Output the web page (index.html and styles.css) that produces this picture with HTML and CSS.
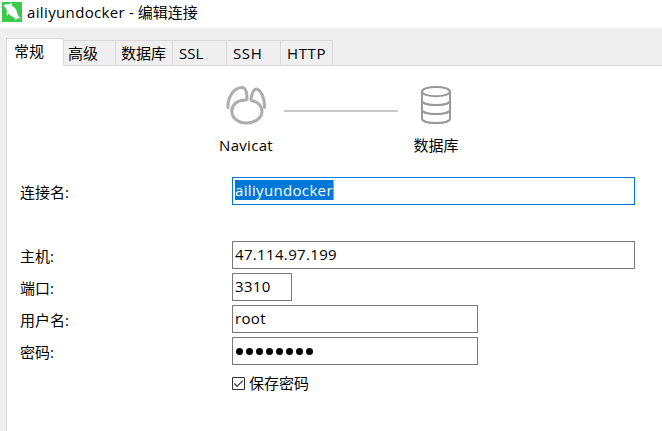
FILE: index.html
```html
<!DOCTYPE html>
<html lang="zh-CN">
<head>
<meta charset="utf-8">
<title>ailiyundocker - 编辑连接</title>
<link rel="stylesheet" href="styles.css">
</head>
<body>
<header class="titlebar">
  <svg class="logo" width="20" height="20" viewBox="0 0 20 20"><rect width="20" height="20" fill="#3bca4b"/><path d="M1.5 3.6Q3.5 1.8 6.5 2.2L9.6 1 9.8 3.4Q14.5 6 15.3 11.5Q15.8 14 18.8 16.6L15.6 16.2 13.5 18.6Q13.4 16.5 11.8 15.3Q8 14 6.6 11.6L5.2 14.2Q4 12 5 9.4Q4.6 7.2 3.2 5.2Z" fill="#fff"/></svg>
  <h1 class="title"><span class="latin">ailiyundocker</span> - 编辑连接</h1>
</header>
<main class="dialog">
  <nav class="tabs">
    <div class="tab active">常规</div>
    <div class="tab advanced">高级</div>
    <div class="tab database">数据库</div>
    <div class="tab ssl">SSL</div>
    <div class="tab ssh">SSH</div>
    <div class="tab http">HTTP</div>
  </nav>
  <section class="panel">
    <div class="route">
      <div class="endpoint">
        <svg width="42" height="42" viewBox="0 0 42 42" fill="none" stroke="#adadad" stroke-width="3" stroke-linecap="round" stroke-linejoin="round"><path d="M3 23.5C2.5 13 9 3.5 17 3.5 20.5 3.5 22 8 22 14.5 22 16 20.5 16.2 18.5 16.2 12 16.2 6.8 21 6.8 27 6.8 34.5 13.5 39 21.5 39 30.5 39 37 33.5 37 27.5 37 21.5 32 17.8 28 17 26.2 16.6 25.7 16.1 26 14.5 27 9 28.8 5 31.5 5 36 6 40 15 39.5 23.5"/></svg>
        <span class="navicat">Navicat</span>
      </div>
      <div class="link"></div>
      <div class="endpoint">
        <svg width="42" height="42" viewBox="0 0 42 42" fill="none" stroke="#999" stroke-width="2"><ellipse cx="21" cy="7.6" rx="14" ry="4.7"/><path d="M7 7.6V34.6c0 6 28 6 28 0V7.6M7 16.6c0 6 28 6 28 0M7 25.6c0 6 28 6 28 0"/></svg>
        <span>数据库</span>
      </div>
    </div>
    <form class="form">
      <div class="row name"><label>连接名:</label><div class="field focus"><span class="selection">ailiyundocker</span></div></div>
      <div class="row"><label>主机:</label><div class="field host">47.114.97.199</div></div>
      <div class="row"><label>端口:</label><div class="field port">3310</div></div>
      <div class="row"><label>用户名:</label><div class="field medium">root</div></div>
      <div class="row"><label>密码:</label><div class="field medium dots"><i></i><i></i><i></i><i></i><i></i><i></i><i></i><i></i></div></div>
      <div class="save"><svg width="13" height="13" viewBox="0 0 13 13" fill="none" stroke="#333"><path d="M.5.5h12v12H.5z"/><path d="m2.3 6.5 2.8 2.8 5.6-5.6" stroke-width="1.2"/></svg><span>保存密码</span></div>
    </form>
  </section>
</main>
</body>
</html>
```
FILE: styles.css
```css
* { box-sizing: border-box; }
body {
  margin: 0;
  width: 662px;
  height: 431px;
  overflow: hidden;
  background: #efefef;
  color: #000;
  font: 15px/20px "Open Sans", "Noto Sans CJK SC", sans-serif;
  white-space: nowrap;
}
.titlebar {
  display: flex;
  height: 28px;
  padding: 2px 0 0 2px;
  background: #fff;
}
.title { margin: 0 0 0 5px; font: inherit; }
.latin { letter-spacing: .36px; }
.dialog { padding: 10px 0 0 6px; }
.tabs { display: flex; align-items: flex-end; height: 28px; }
.tab {
  height: 26px;
  padding: 2px 0 0 5px;
  border: 1px solid #d9d9d9;
  border-left: 0;
}
.active {
  width: 58px;
  height: 28px;
  padding: 2px 0 0 7px;
  border-left: 1px solid #d9d9d9;
  border-bottom-color: #fff;
  background: #fff;
}
.advanced { width: 52px; padding-left: 4px; }
.database { width: 57px; }
.ssl { width: 54px; padding-left: 6px; }
.ssh { width: 54px; padding-left: 6px; letter-spacing: .6px; }
.http { width: 52px; padding-left: 6px; letter-spacing: .6px; }
.tabs::after { content: ""; flex: 1; border-bottom: 1px solid #d9d9d9; }
.panel {
  height: 365px;
  padding: 18px 0 0 13px;
  border-left: 1px solid #d9d9d9;
  background: #fff;
}
.route { display: flex; height: 93px; padding-left: 199px; }
.endpoint { display: flex; flex-direction: column; align-items: center; width: 54px; }
.endpoint svg { flex: none; margin-bottom: 9px; }
.navicat { letter-spacing: .3px; }
.link { width: 114px; height: 2px; margin: 26px 11px 0; background: #c8c8c8; }
.row { display: flex; height: 28px; margin-bottom: 4px; }
.row.name { margin-bottom: 36px; }
.row label { width: 212px; padding-top: 5px; }
.field {
  width: 403px;
  padding: 2px 0 0 2px;
  border: 1px solid #7a7a7a;
  letter-spacing: .34px;
}
.focus { border-color: #0078d7; }
.selection {
  display: inline-block;
  height: 20px;
  line-height: 20px;
  border-right: 1px solid #ff8728;
  background: #0078d7;
  color: #fff;
}
.port { width: 60px; }
.medium { width: 246px; }
.dots { display: flex; gap: 3px; padding: 10px 0 0 3px; }
.dots i { width: 7px; height: 7px; border-radius: 50%; background: #000; }
.save { display: flex; gap: 4px; padding: 8px 0 0 212px; }
.save span { margin-top: -4px; }
```
